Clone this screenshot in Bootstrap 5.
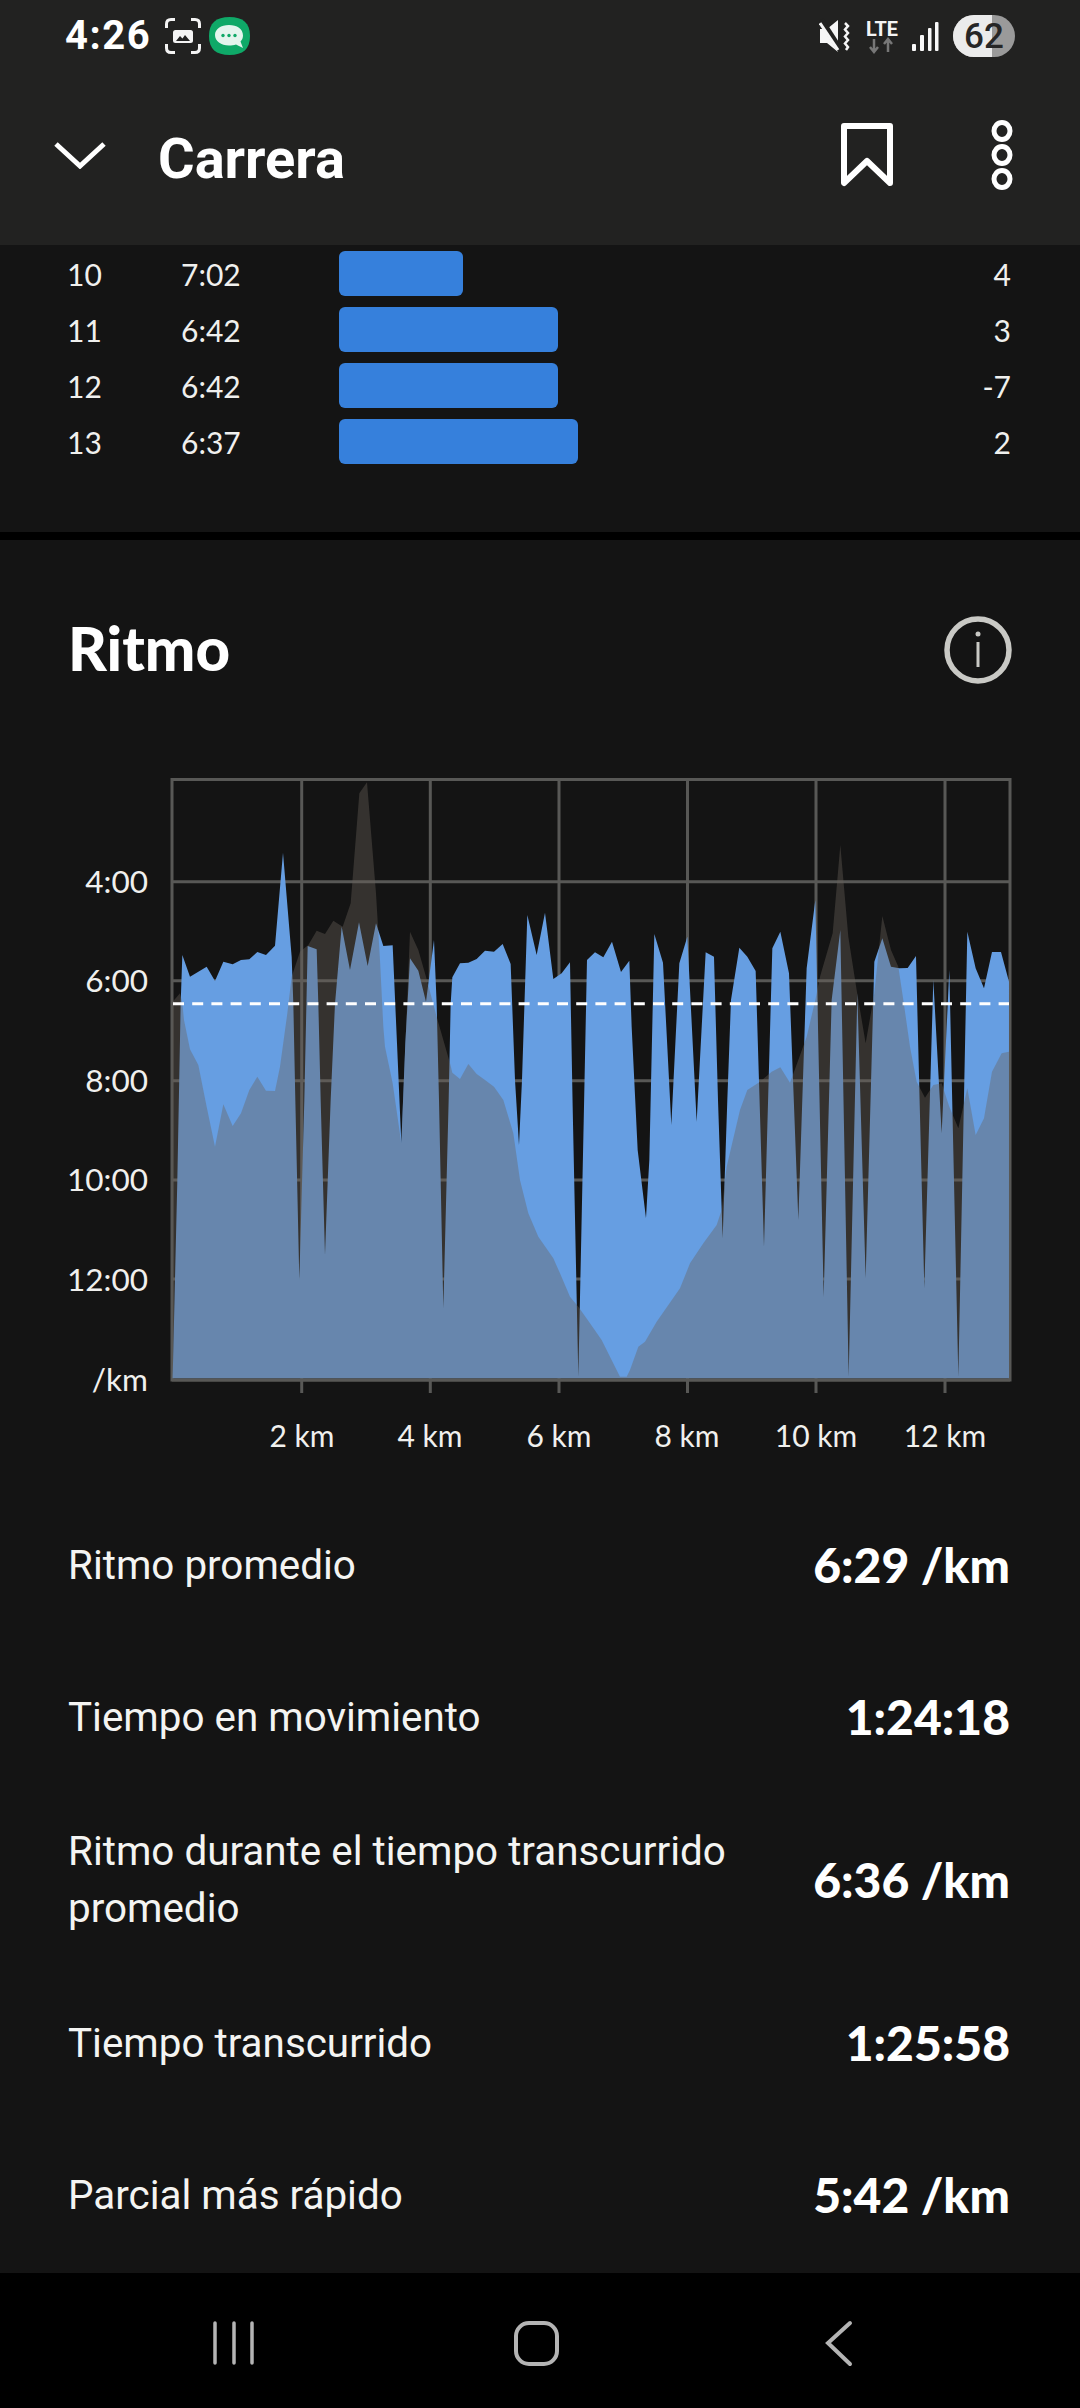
<!DOCTYPE html>
<html lang="es">
<head>
  <meta charset="UTF-8" />
  <title>Carrera</title>
  <link href="https://cdn.jsdelivr.net/npm/bootstrap@5.3.3/dist/css/bootstrap.min.css" rel="stylesheet" />
  <style>
    html, body { margin: 0; background: #141414; }
    body { width: 1080px; height: 2408px; overflow: hidden; font-family: Lato, "Liberation Sans", sans-serif; color: #f4f4f2; }
    .phone { height: 2408px; }
    .top-area { height: 245px; background: #222221; }
    .status-row { height: 72px; padding: 0 64px 0 65px; }
    .clock { font: 700 40px/1 Roboto, sans-serif; letter-spacing: 1.5px; color: #fff; width: 100px; }
    .app-title { font: 700 56px/1 Roboto, sans-serif; color: #fff; margin-left: 52px; }
    .tool-row { height: 173px; padding: 0 67px 0 54px; }
    .lift { margin-bottom: 7px; }
    .mark-gap { margin-left: 98px; }
    .splits { height: 295px; padding: 6px 69px 0 67px; border-bottom: 8px solid #000; }
    .split-row { height: 45px; margin-bottom: 11px; font-size: 30px; color: #f0f0ee; }
    .split-km { width: 114px; padding-top: 1px; }
    .split-pace { width: 158px; padding-top: 1px; }
    .split-bar { height: 45px; background: #3680dc; border-radius: 6px; }
    .split-gap { margin-left: auto; padding-top: 1px; }
    .sect-head { height: 220px; padding: 0 68px 0 68px; }
    .sect-title { font-family: Lato, sans-serif; font-size: 60px; font-weight: 900; color: #fff; margin: 0 0 5px; line-height: 1; }
    .chart-svg { display: block; }
    .chart-svg text { font-family: Lato, sans-serif; font-size: 30px; fill: #f0f0ee; }
    .chart-svg .y-tick text { font-size: 31.500px; }
    .stats { padding: 0 70px 0 68px; }
    .stat-row { min-height: 152px; padding: 30px 0; }
    .stat-name { font-family: Roboto, sans-serif; font-size: 40.400px; line-height: 57px; max-width: 720px; color: #f4f4f2; }
    .stat-val { font-size: 48px; font-weight: 900; color: #fff; white-space: nowrap; }
    .nav-strip { height: 135px; background: #000; }
  </style>
</head>
<body>
<div class="phone d-flex flex-column">

  <div class="top-area">
    <div class="status-row d-flex align-items-center">
      <span class="clock">4:26</span>
      <svg width="36" height="36" viewBox="0 0 36 36" fill="none" stroke="#f4f4f4" stroke-width="3">
        <path d="M1.500 10V6q0-4.500 4.500-4.500h4M26 1.500h4q4.500 0 4.500 4.500v4M34.500 26v4q0 4.500-4.500 4.500h-4M10 34.500H6q-4.500 0-4.500-4.500v-4"/>
        <rect x="8" y="12" width="20" height="13" rx="2.500" fill="#f4f4f4" stroke="none"/>
        <path d="M11 23l4-5 2.500 2.500 2.500-3.500 5 6z" fill="#222" stroke="none"/>
      </svg>
      <svg class="ms-2" width="41" height="38" viewBox="0 0 41 38">
        <path d="M20.500 0C34 0 41 6 41 19s-7 19-20.500 19S0 32 0 19 7 0 20.500 0z" fill="#0fa968"/>
        <path d="M20 8c8 0 14 4 14 10.500 0 2.500-1 4.500-2.500 6l2.500 6.500-7-3.500c-2 .6-4.500 1-7 1-8 0-14-4.500-14-10.500S12 8 20 8z" fill="#e4f5ee"/>
        <circle cx="14" cy="18.500" r="1.700" fill="#0fa968"/><circle cx="20" cy="18.500" r="1.700" fill="#0fa968"/><circle cx="26" cy="18.500" r="1.700" fill="#0fa968"/>
      </svg>
      <div class="ms-auto d-flex align-items-center">
        <svg width="197" height="44" viewBox="819 14 197 44">
          <path d="M820 29h7l11-9v32l-11-9h-7z" fill="#f6f6f6"/>
          <path d="M821 20l20 31" stroke="#222221" stroke-width="6"/>
          <path d="M820 23l18 27" stroke="#f6f6f6" stroke-width="3"/>
          <path d="M845 23l3 3-3 3.500 3 3.500-3 3.500 3 3.500-3 3.500 3 3.500-2 3" fill="none" stroke="#f6f6f6" stroke-width="2.500"/>
          <text x="866" y="36" font-family="Roboto, sans-serif" font-size="20" font-weight="700" fill="#f4f4f4" textLength="32" lengthAdjust="spacingAndGlyphs">LTE</text>
          <path d="M874 39v13m-4-5l4 5 4-5M888 52V39m-4 5l4-5 4 5" fill="none" stroke="#777" stroke-width="2.500"/>
          <rect x="912" y="44" width="4" height="7" rx="1" fill="#f8f8f8"/><rect x="920" y="35" width="4" height="16" rx="1" fill="#f8f8f8"/><rect x="928" y="28" width="3.500" height="23" rx="1" fill="#f8f8f8"/><rect x="935" y="22" width="3.500" height="29" rx="1" fill="#f8f8f8"/>
          <rect x="953" y="15" width="62" height="42" rx="21" fill="#9a9a9a"/>
          <path d="M992 15h-18a21 21 0 0 0 0 42h18z" fill="#ebebeb"/>
          <text x="984" y="48" text-anchor="middle" font-family="Roboto, sans-serif" font-size="35" font-weight="500" fill="#262626">62</text>
        </svg>
      </div>
    </div>
    <div class="tool-row d-flex align-items-center">
      <svg class="lift" width="52" height="28" viewBox="0 0 52 28" fill="none" stroke="#fff" stroke-width="5"><path d="M2 3l24 22 24-22"/></svg>
      <span class="app-title">Carrera</span>
      <svg class="ms-auto lift" width="52" height="64" viewBox="0 0 52 64" fill="none" stroke="#fff" stroke-width="6" stroke-linejoin="round"><path d="M3 3h46v57L26 38 3 60z"/></svg>
      <svg class="mark-gap lift" width="22" height="70" viewBox="0 0 22 70" fill="none" stroke="#fff" stroke-width="5"><ellipse cx="11" cy="11" rx="8" ry="8.500"/><ellipse cx="11" cy="35" rx="8" ry="8.500"/><ellipse cx="11" cy="59" rx="8" ry="8.500"/></svg>
    </div>
  </div>

  <div class="splits">
    <div class="split-row d-flex align-items-center"><span class="split-km">10</span><span class="split-pace">7:02</span><div class="split-bar" style="width:124px"></div><span class="split-gap">4</span></div>
    <div class="split-row d-flex align-items-center"><span class="split-km">11</span><span class="split-pace">6:42</span><div class="split-bar" style="width:219px"></div><span class="split-gap">3</span></div>
    <div class="split-row d-flex align-items-center"><span class="split-km">12</span><span class="split-pace">6:42</span><div class="split-bar" style="width:219px"></div><span class="split-gap">-7</span></div>
    <div class="split-row d-flex align-items-center"><span class="split-km">13</span><span class="split-pace">6:37</span><div class="split-bar" style="width:239px"></div><span class="split-gap">2</span></div>
  </div>

  <div class="sect-head d-flex justify-content-between align-items-center">
    <h2 class="sect-title">Ritmo</h2>
    <svg width="68" height="68" viewBox="0 0 68 68" fill="none" stroke="#c9c9c5" stroke-width="5.500"><circle cx="34" cy="34" r="31"/><path d="M34 26v25" stroke-width="3"/><circle cx="34" cy="18" r="2.500" fill="#c9c9c5" stroke="none"/></svg>
  </div>

  <svg class="chart-svg" width="1080" height="729" viewBox="0 760 1080 729">
    <g stroke="#585856" stroke-width="3" fill="none">
      <path d="M172 779.500H1010V1380H172zM301.700 779V1393M430.300 779V1393M559 779V1393M687.500 779V1393M816 779V1393M945 779V1393"/>
      <path d="M172 881.700H1010M172 980.700H1010M172 1080.700H1010M172 1180H1010M172 1279H1010"/>
    </g>
    <g transform="translate(60 760) scale(.33333)">
      <polygon fill="#669ee2" points="338,1855 352,1261 362,731 367,585 390,650 440,620 465,663 490,605 518,613 543,600 568,598 592,576 618,585 645,557 669,278 695,590 700,731 706,1020 718,1560 733,1020 743,558 770,568 775,731 782,1020 795,1485 812,1020 825,731 845,500 870,630 897,487 923,618 948,490 970,558 998,556 1011,850 1024,1150 1036,850 1050,595 1075,632 1098,725 1122,540 1130,731 1137,1020 1150,1645 1166,1020 1172,731 1177,652 1200,610 1225,608 1250,597 1275,572 1302,575 1328,552 1352,612 1365,960 1377,1155 1386,960 1402,465 1430,585 1455,458 1480,657 1505,640 1530,607 1538,1040 1555,1850 1572,1040 1581,600 1605,577 1630,592 1656,545 1683,636 1708,602 1715,800 1733,1170 1758,1375 1768,1200 1783,522 1809,608 1834,1095 1858,610 1882,530 1910,1085 1937,577 1962,590 1974,1020 1988,1435 2002,1020 2013,720 2038,563 2062,590 2087,633 2112,1460 2137,565 2161,515 2187,640 2215,1380 2240,625 2266,420 2291,1610 2315,720 2341,510 2366,1850 2392,700 2417,1555 2443,605 2467,535 2493,620 2518,625 2543,624 2568,588 2593,1585 2620,660 2645,1120 2668,630 2695,1850 2722,515 2747,625 2772,685 2796,576 2823,576 2847,665 2847,1855"/>
      <polygon fill="#696359" fill-opacity=".39" points="338,1855 338,725 360,700 367,730 372,780 390,868 415,915 440,1040 465,1160 490,1033 518,1098 543,1060 568,990 592,950 618,992 645,993 660,920 682,760 695,650 720,575 745,555 770,512 795,522 820,482 848,500 872,430 898,100 921,67 948,400 960,600 970,800 975,860 998,970 1024,1150 1050,515 1075,570 1098,650 1130,770 1170,910 1177,938 1200,957 1225,912 1250,942 1275,960 1302,980 1330,1020 1360,1120 1380,1260 1405,1360 1435,1430 1480,1495 1500,1540 1530,1610 1555,1640 1590,1690 1625,1740 1650,1790 1680,1850 1700,1850 1710,1830 1735,1760 1755,1745 1790,1685 1860,1585 1890,1510 1930,1450 1970,1395 1985,1350 1995,1260 2000,1220 2040,1050 2062,990 2100,965 2135,935 2161,922 2190,968 2215,900 2240,830 2266,720 2280,650 2318,520 2341,255 2365,530 2390,690 2417,850 2443,700 2467,468 2493,570 2515,620 2530,720 2550,860 2570,965 2595,1013 2620,975 2645,970 2668,1040 2695,1105 2722,985 2747,1125 2772,1075 2796,935 2825,880 2847,875 2847,1855"/>
    </g>
    <path d="M173 1003.700H1009" stroke="#fff" stroke-width="3" stroke-dasharray="11 8.200"/>
    <path d="M172 1380H1010" stroke="#585856" stroke-width="3"/>
    <g class="y-tick" text-anchor="end">
      <text x="148" y="893">4:00</text><text x="148" y="992">6:00</text><text x="148" y="1092">8:00</text>
      <text x="148" y="1191">10:00</text><text x="148" y="1291">12:00</text><text x="148" y="1391">/km</text>
    </g>
    <g text-anchor="middle">
      <text x="302" y="1447">2 km</text><text x="430" y="1447">4 km</text><text x="559" y="1447">6 km</text>
      <text x="687" y="1447">8 km</text><text x="816" y="1447">10 km</text><text x="945" y="1447">12 km</text>
    </g>
  </svg>

  <div class="stats flex-grow-1">
    <div class="stat-row d-flex justify-content-between align-items-center"><span class="stat-name">Ritmo promedio</span><span class="stat-val">6:29 /km</span></div>
    <div class="stat-row d-flex justify-content-between align-items-center"><span class="stat-name">Tiempo en movimiento</span><span class="stat-val">1:24:18</span></div>
    <div class="stat-row d-flex justify-content-between align-items-center"><span class="stat-name">Ritmo durante el tiempo transcurrido promedio</span><span class="stat-val">6:36 /km</span></div>
    <div class="stat-row d-flex justify-content-between align-items-center"><span class="stat-name">Tiempo transcurrido</span><span class="stat-val">1:25:58</span></div>
    <div class="stat-row d-flex justify-content-between align-items-center"><span class="stat-name">Parcial más rápido</span><span class="stat-val">5:42 /km</span></div>
  </div>

  <div class="nav-strip d-flex align-items-start justify-content-center">
    <svg width="1080" height="135" viewBox="0 2273 1080 135" fill="none" stroke="#b4b4b4" stroke-linecap="round">
      <path d="M215 2323V2363M234 2323V2363M252 2323V2363" stroke-width="3.500"/>
      <rect x="516" y="2323" width="41" height="41" rx="13" stroke-width="4"/>
      <path d="M850 2323L828 2343L850 2364" stroke-width="4"/>
    </svg>
  </div>
</div>
<script src="https://cdn.jsdelivr.net/npm/bootstrap@5.3.3/dist/js/bootstrap.bundle.min.js"></script>
</body>
</html>
